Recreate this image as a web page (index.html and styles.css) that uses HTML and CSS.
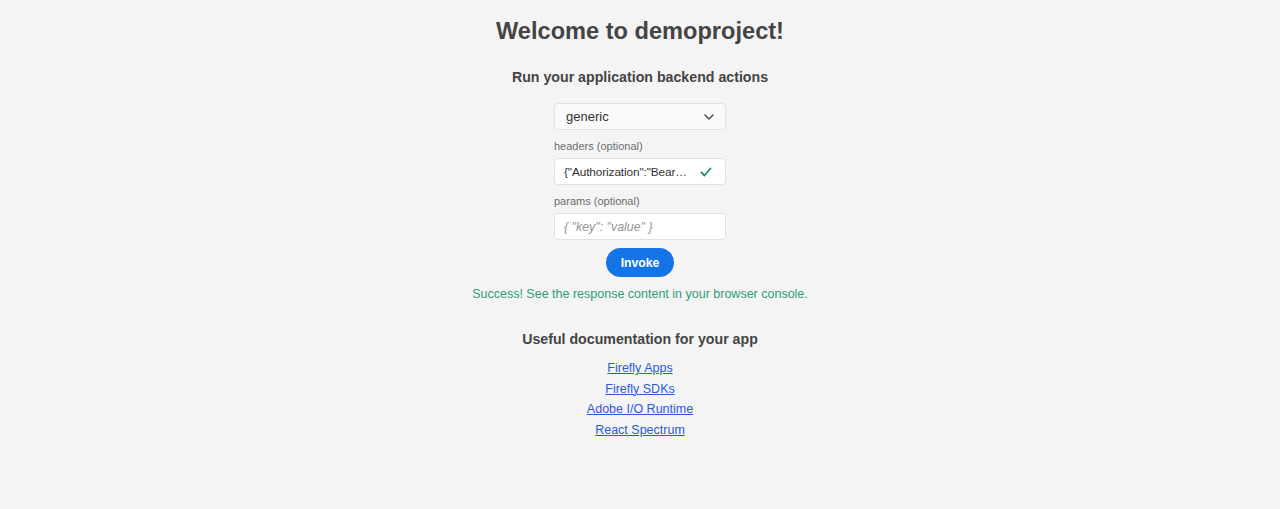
FILE: index.html
```html
<!DOCTYPE html>
<html>
<head>
<meta charset="utf-8">
<link rel="stylesheet" href="styles.css">
</head>
<body>
<main class="page">
  <h1 class="title">Welcome to demoproject!</h1>
  <h3 class="subtitle">Run your application backend actions</h3>
  <form class="form">
    <div class="picker">
      <span class="picker-value">generic</span>
      <svg class="chev" width="10" height="6" viewBox="0 0 10 6"><path d="M1 1l4 4 4-4" fill="none" stroke="#4b4b4b" stroke-width="1.5" stroke-linecap="round" stroke-linejoin="round"/></svg>
    </div>
    <label class="label">headers (optional)</label>
    <div class="field valid">
      <span class="field-value">{"Authorization":"Bear…</span>
      <svg class="check" width="12" height="10" viewBox="0 0 12 10"><path d="M1.5 5.5l3 3 6-7" fill="none" stroke="#268e6c" stroke-width="1.8" stroke-linecap="round" stroke-linejoin="round"/></svg>
    </div>
    <label class="label">params (optional)</label>
    <div class="field">
      <span class="placeholder">{ "key": "value" }</span>
    </div>
    <button type="button" class="btn">Invoke</button>
  </form>
  <p class="success">Success! See the response content in your browser console.</p>
  <h3 class="docs-title">Useful documentation for your app</h3>
  <ul class="links">
    <li><a href="#">Firefly Apps</a></li>
    <li><a href="#">Firefly SDKs</a></li>
    <li><a href="#">Adobe I/O Runtime</a></li>
    <li><a href="#">React Spectrum</a></li>
  </ul>
</main>
</body>
</html>
```
FILE: styles.css
```css
html, body {
  margin: 0;
  padding: 0;
  background: #f4f4f4;
  height: 100%;
}
body {
  font-family: "Liberation Sans", Arial, sans-serif;
  color: #4b4b4b;
}
.page {
  display: flex;
  flex-direction: column;
  align-items: center;
  padding-top: 16px;
}
.title {
  margin: 0;
  font-size: 23.6px;
  line-height: 30px;
  font-weight: 700;
  color: #444;
}
.subtitle {
  margin: 21px 0 0;
  font-size: 14.2px;
  line-height: 20px;
  font-weight: 700;
  color: #444;
}
.form {
  display: flex;
  flex-direction: column;
  align-items: center;
  margin-top: 16px;
  width: 172px;
}
.picker, .field {
  box-sizing: border-box;
  width: 172px;
  height: 27px;
  border: 1px solid #e1e1e1;
  border-radius: 4px;
  display: flex;
  align-items: center;
  justify-content: space-between;
  padding: 0 10px;
  font-size: 13px;
}
.picker {
  background: #fafafa;
  padding-left: 11px;
}
.field {
  background: #fff;
  padding-left: 9px;
}
.picker-value, .field-value {
  color: #323232;
}
.field-value {
  white-space: nowrap;
  font-size: 11.8px;
  letter-spacing: -0.1px;
}
.chev { margin-right: 1px; flex: none; }
.check { margin-left: auto; margin-right: 3px; flex: none; }
.placeholder {
  color: #959595;
  font-style: italic;
  font-size: 12.4px;
}
.label {
  align-self: flex-start;
  font-size: 11px;
  color: #6e6e6e;
  margin: 9px 0 5px;
  line-height: 14px;
}
.btn {
  margin-top: 8px;
  height: 29px;
  padding: 0 14.5px;
  border: none;
  border-radius: 15px;
  background: #1473e6;
  color: #fff;
  font-family: "Liberation Sans", Arial, sans-serif;
  font-size: 12.2px;
  font-weight: 700;
}
.success {
  margin: 9px 0 0;
  font-size: 12.5px;
  line-height: 16px;
  color: #2d9d78;
}
.docs-title {
  margin: 27px 0 0;
  font-size: 14.2px;
  line-height: 20px;
  font-weight: 700;
  color: #444;
}
.links {
  list-style: none;
  margin: 9px 0 0;
  padding: 0;
  display: flex;
  flex-direction: column;
  align-items: center;
}
.links li {
  font-size: 12.5px;
  line-height: 20.7px;
}
.links a {
  color: #2a5bd7;
}
```
